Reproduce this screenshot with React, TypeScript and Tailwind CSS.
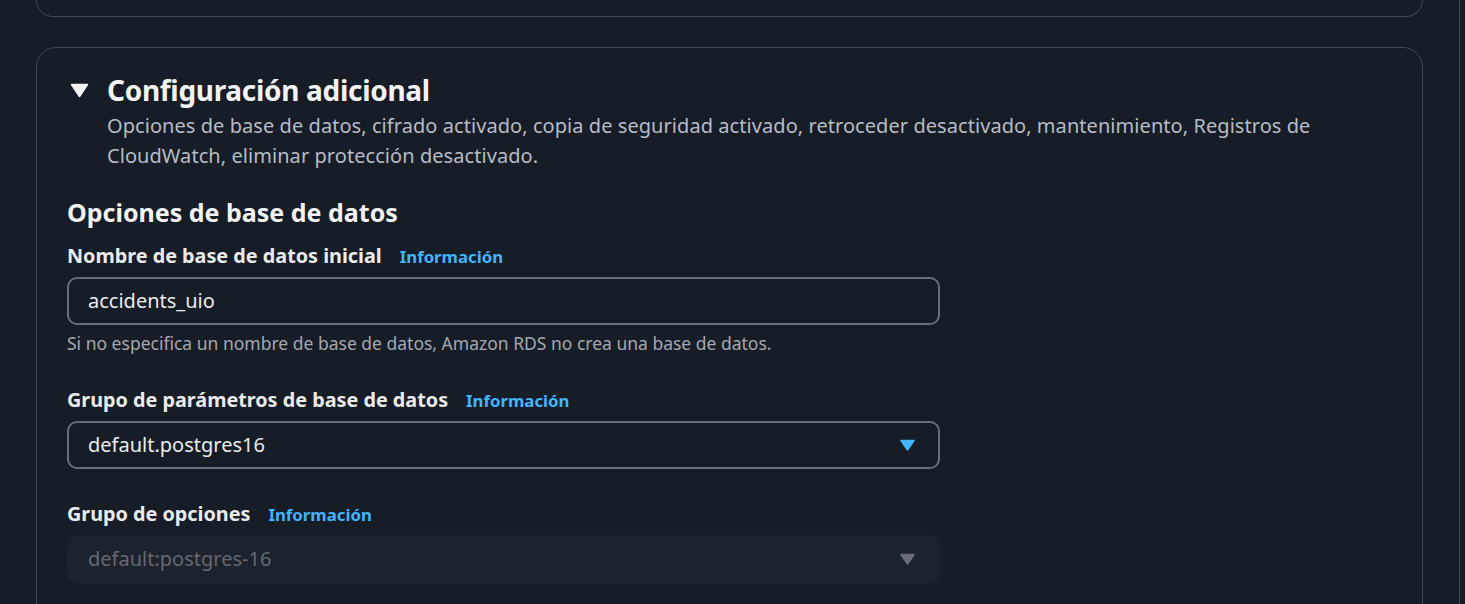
import React from "react";

const Caret = ({ color }: { color: string }) => (
  <svg width="15" height="12" viewBox="0 0 15 12" className="shrink-0">
    <path d="M1 1.5h13L7.5 11z" fill={color} stroke={color} strokeWidth="1.5" strokeLinejoin="round" />
  </svg>
);

function Label({ text }: { text: string }) {
  return (
    <div className="flex items-baseline gap-[18px] h-[26px] leading-[26px]">
      <span className="text-[19.8px] font-bold text-[#e9ebed]">{text}</span>
      <a className="text-[16.8px] font-bold text-[#42b4ff]">Información</a>
    </div>
  );
}

export default function App() {
  return (
    <div className="min-h-screen bg-[#161d26] font-['Noto_Sans',sans-serif] flex">
      <div className="flex-1 px-9">
        <div className="h-[17px] border-x border-b border-[#414750] rounded-b-[20px]" />

        <section className="mt-[30px] border border-[#414750] rounded-[20px] pt-[24px] pl-[30px] pb-[40px]">
          <div className="flex items-center h-[36px]">
            <span className="ml-[3px] mr-[18px]">
              <svg width="19" height="15" viewBox="0 0 19 15">
                <path d="M1.5 1.5h16L9.5 13.5z" fill="#f3f3f5" stroke="#f3f3f5" strokeWidth="1.5" strokeLinejoin="round" />
              </svg>
            </span>
            <h2 className="text-[28px] font-bold text-[#f3f3f5] tracking-[-0.3px]">Configuración adicional</h2>
          </div>
          <p className="mt-[3px] ml-[40px] max-w-[1240px] text-[20px] tracking-[0.06px] leading-[30px] text-[#b6bcc6]">
            Opciones de base de datos, cifrado activado, copia de seguridad activado, retroceder desactivado, mantenimiento, Registros de CloudWatch, eliminar protección desactivado.
          </p>

          <h3 className="mt-[25px] text-[25px] leading-[32px] font-bold text-[#f3f3f5]">Opciones de base de datos</h3>

          <div className="mt-[15px]">
            <Label text="Nombre de base de datos inicial" />
          </div>
          <div className="mt-[8px] w-[873px] h-[48px] border-2 border-[#6b6e78] rounded-[10px] flex items-center px-[19px] text-[20px] text-[#e9ebed]">
            accidents_uio
          </div>
          <p className="mt-[7px] text-[17.5px] leading-[22px] text-[#a4a8b0]">
            Si no especifica un nombre de base de datos, Amazon RDS no crea una base de datos.
          </p>

          <div className="mt-[33px]">
            <Label text="Grupo de parámetros de base de datos" />
          </div>
          <div className="mt-[8px] w-[873px] h-[48px] border-2 border-[#6b6e78] rounded-[10px] flex items-center justify-between pl-[19px] pr-[23px] text-[20px] text-[#e9ebed]">
            <span>default.postgres16</span>
            <Caret color="#42b4ff" />
          </div>

          <div className="mt-[32px]">
            <Label text="Grupo de opciones" />
          </div>
          <div className="mt-[8px] w-[873px] h-[48px] bg-[#1c232d] rounded-[10px] flex items-center justify-between pl-[21px] pr-[25px] text-[20px] text-[#656871]">
            <span>default:postgres-16</span>
            <Caret color="#6b6e78" />
          </div>
        </section>
      </div>
      <div className="w-[6px] border-l border-[#414750]" />
    </div>
  );
}
